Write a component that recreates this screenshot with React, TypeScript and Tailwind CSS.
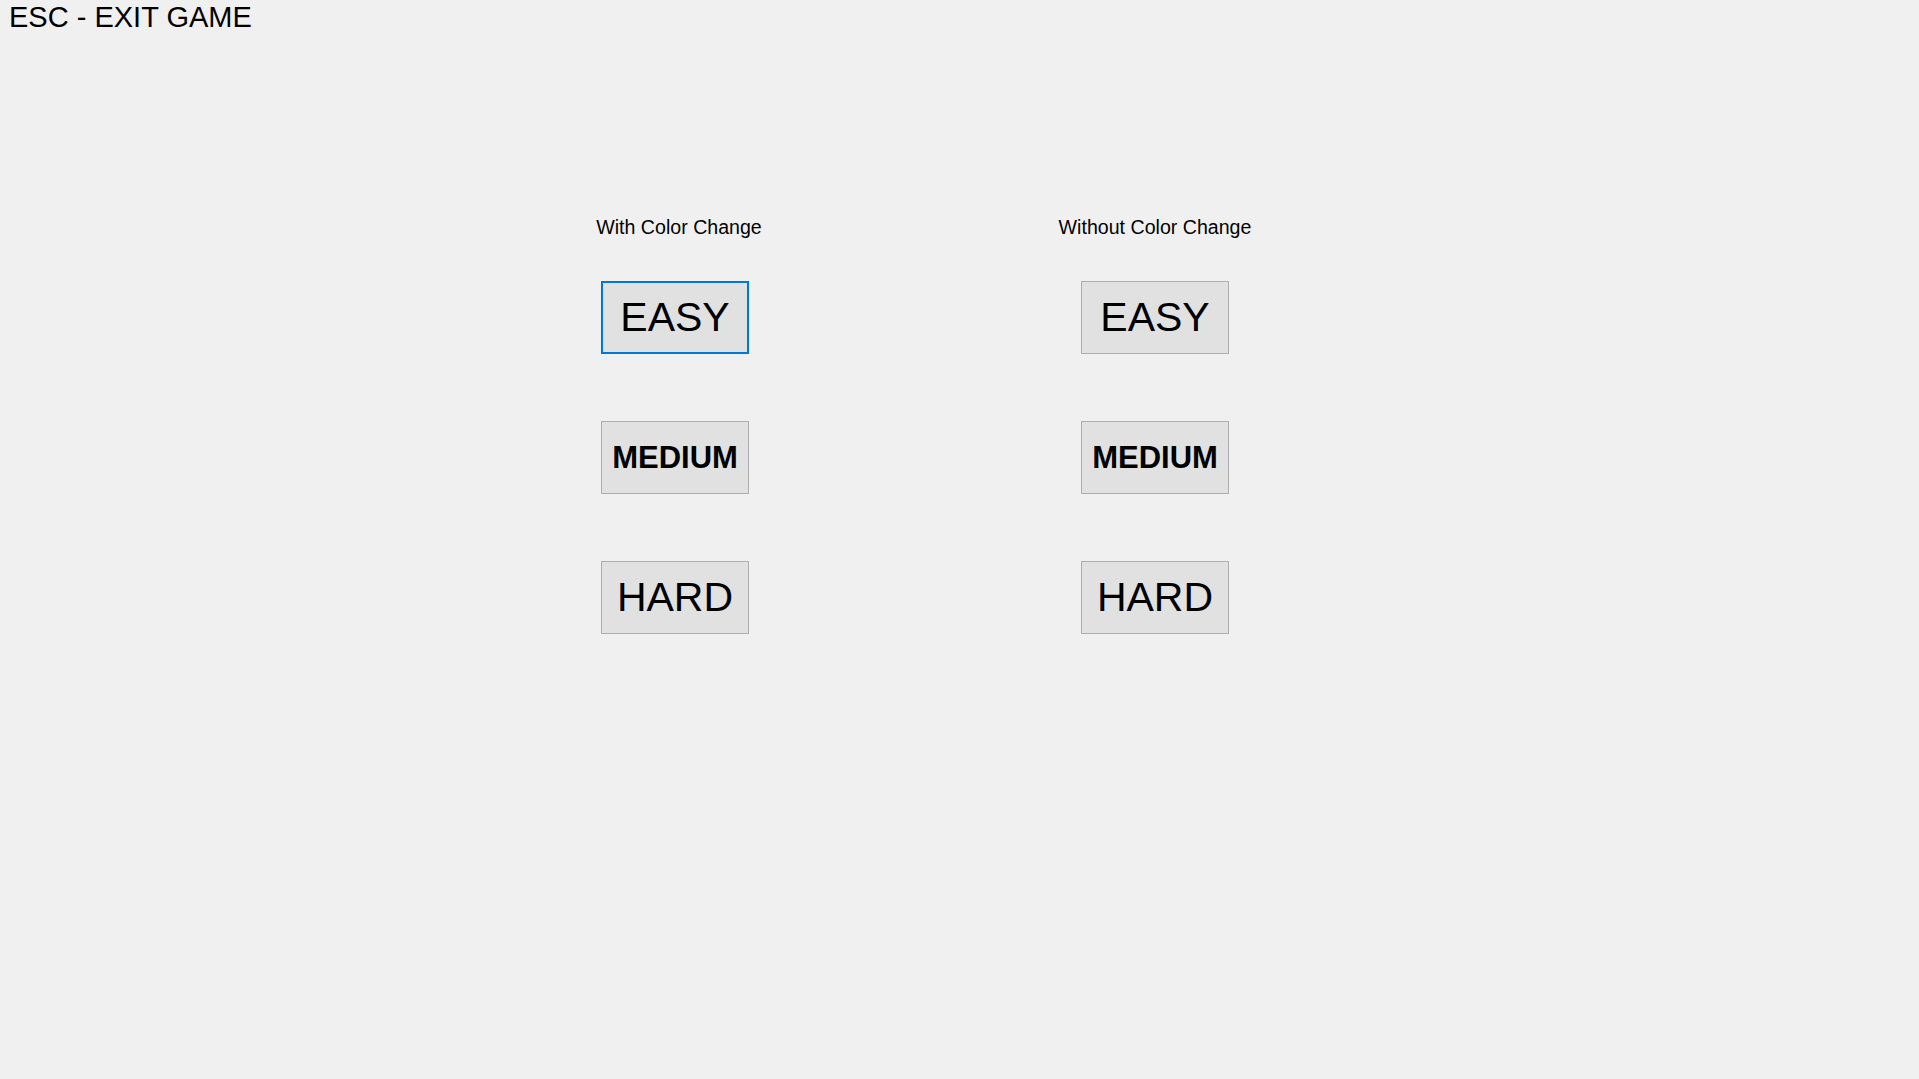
import clsx from "clsx";

const font = { fontFamily: '"Liberation Sans", Arial, sans-serif' };

function LevelButton({ label, focused, small }: { label: string; focused?: boolean; small?: boolean }) {
  return (
    <button
      type="button"
      className={clsx(
        "flex h-[73px] w-[148px] items-center justify-center bg-[#e1e1e1] leading-none text-black",
        focused ? "border-2 border-[#0078d7]" : "border border-[#adadad]",
        small ? "text-[31px] font-bold" : "text-[41px]"
      )}
    >
      {label}
    </button>
  );
}

function Column({ title, focusFirst, shift }: { title: string; focusFirst?: boolean; shift?: boolean }) {
  return (
    <div className="flex w-[148px] flex-col items-center">
      <p className={clsx("whitespace-nowrap text-[19.6px] leading-none text-black", shift && "pl-2")}>{title}</p>
      <div className="mt-[43px] flex flex-col gap-[67px]">
        <LevelButton label="EASY" focused={focusFirst} />
        <LevelButton label="MEDIUM" small />
        <LevelButton label="HARD" />
      </div>
    </div>
  );
}

export default function App() {
  return (
    <div className="h-screen w-full overflow-hidden bg-[#f0f0f0]" style={font}>
      <p className="pl-[9px] pt-[3px] text-[29px] leading-none text-black">ESC - EXIT GAME</p>
      <div className="mt-[186px] flex gap-[332px] pl-[601px]">
        <Column title="With Color Change" focusFirst shift />
        <Column title="Without Color Change" />
      </div>
    </div>
  );
}
